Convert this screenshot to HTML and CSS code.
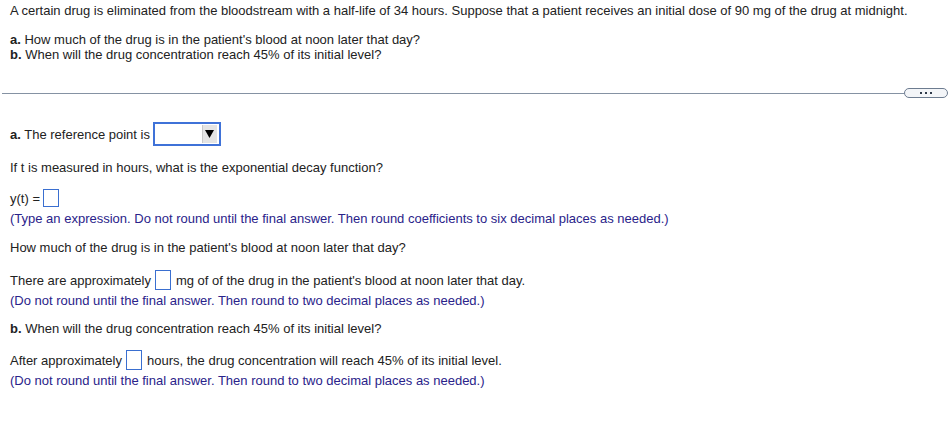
FILE: index.html
```html
<!DOCTYPE html>
<html>
<head>
<meta charset="utf-8">
<link rel="stylesheet" href="styles.css">
</head>
<body>
<div class="question">
  <p class="line intro">A certain drug is eliminated from the bloodstream with a half-life of 34 hours. Suppose that a patient receives an initial dose of 90 mg of the drug at midnight.</p>
  <div class="parts">
    <p class="line"><b>a.</b> How much of the drug is in the patient's blood at noon later that day?</p>
    <p class="line"><b>b.</b> When will the drug concentration reach 45% of its initial level?</p>
  </div>
</div>
<div class="divider">
  <span class="rule"></span>
  <span class="more"><i></i><i></i><i></i></span>
</div>
<div class="answer">
  <div class="row ref"><span><b>a.</b> The reference point is</span><span class="select"><span class="arrow"><svg width="9" height="8" viewBox="0 0 9 8"><path d="M0 0H9L4.5 8Z" fill="#000"/></svg></span></span></div>
  <p class="line q1">If t is measured in hours, what is the exponential decay function?</p>
  <div class="row yt"><span>y(t) =</span><span class="box"></span></div>
  <p class="line note n1">(Type an expression. Do not round until the final answer. Then round coefficients to six decimal places as needed.)</p>
  <p class="line q2">How much of the drug is in the patient's blood at noon later that day?</p>
  <div class="row amt"><span>There are approximately</span><span class="box tall"></span><span>mg of of the drug in the patient's blood at noon later that day.</span></div>
  <p class="line note n2">(Do not round until the final answer. Then round to two decimal places as needed.)</p>
  <p class="line q3"><b>b.</b> When will the drug concentration reach 45% of its initial level?</p>
  <div class="row hrs"><span>After approximately</span><span class="box tall"></span><span>hours, the drug concentration will reach 45% of its initial level.</span></div>
  <p class="line note n3">(Do not round until the final answer. Then round to two decimal places as needed.)</p>
</div>
</body>
</html>
```
FILE: styles.css
```css
html, body {
  margin: 0;
  padding: 0;
  background: #fff;
}
body {
  font-family: "Liberation Sans", Arial, sans-serif;
  font-size: 13px;
  color: #222;
}
p { margin: 0; }
b { font-weight: bold; }
.line {
  line-height: 15px;
  height: 15px;
  white-space: nowrap;
}
.question {
  padding: 3px 0 0 10px;
}
.parts {
  margin-top: 14px;
}
.divider {
  display: flex;
  align-items: center;
  margin-top: 26px;
  padding-left: 2px;
  height: 10px;
}
.rule {
  flex: 1;
  height: 1px;
  background: #8592a3;
}
.more {
  width: 42px;
  height: 8px;
  border: 1px solid #6d7c90;
  border-radius: 5px;
  background: #f3f5f8;
  margin-right: 3px;
  display: flex;
  justify-content: center;
  align-items: center;
  gap: 3px;
}
.more i {
  width: 2px;
  height: 2px;
  background: #2f3a4a;
  display: block;
}
.answer {
  padding-left: 10px;
}
.row {
  display: flex;
  align-items: center;
  white-space: nowrap;
  line-height: 15px;
}
.ref {
  margin-top: 24px;
  height: 24px;
  gap: 3px;
}
.select {
  width: 62px;
  height: 20px;
  border: 2px solid #3f72d8;
  background: #fff;
  display: flex;
  justify-content: flex-end;
  align-items: center;
  padding-right: 2px;
}
.arrow {
  width: 14px;
  height: 18px;
  background: #e4e4e4;
  border-left: 1px solid #c9c9c9;
  display: flex;
  align-items: center;
  justify-content: center;
}
.arrow svg { display: block; }
.box {
  display: inline-block;
  width: 14px;
  height: 16px;
  border: 1px solid #3a6fd0;
  background: #fff;
  margin: 0 5px 0 4px;
}
.box.tall {
  height: 18px;
}
.q1 { margin-top: 14px; }
.yt { margin-top: 14px; height: 18px; }
.yt .box { margin-left: 3px; }
.note { color: #2a238a; }
.n1 { margin-top: 4px; }
.q2 { margin-top: 14px; }
.amt { margin-top: 15px; height: 20px; }
.n2 { margin-top: 3px; }
.q3 { margin-top: 13px; }
.hrs { margin-top: 14px; height: 20px; }
.n3 { margin-top: 3px; }
```
